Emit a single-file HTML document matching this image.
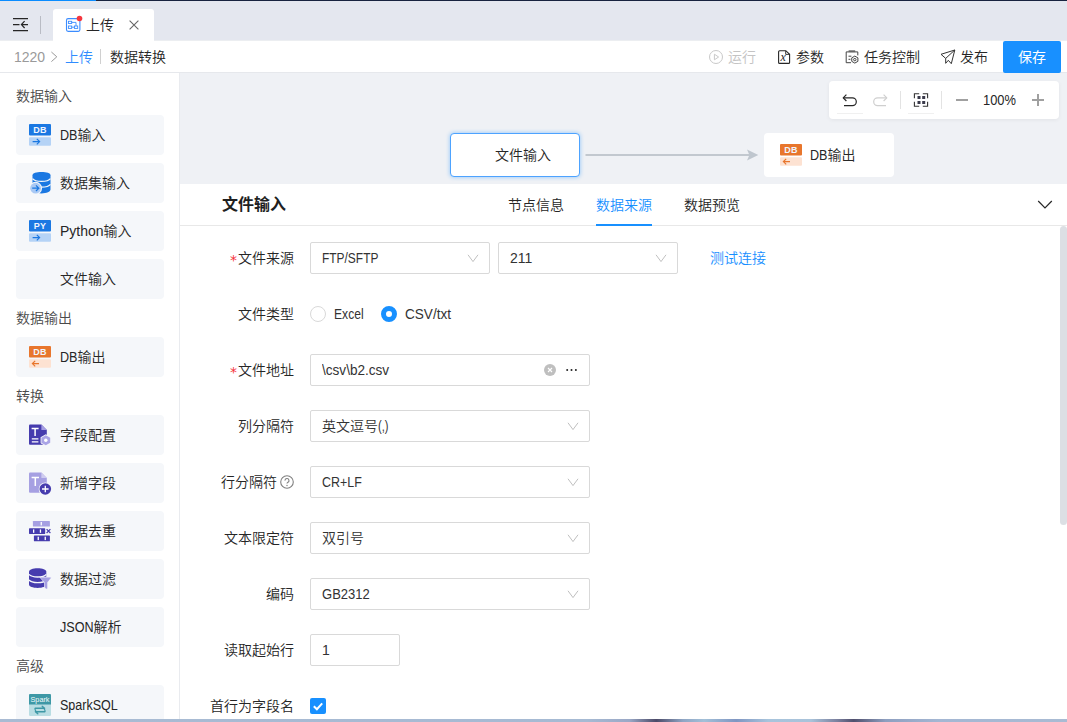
<!DOCTYPE html>
<html lang="zh-CN">
<head>
<meta charset="utf-8">
<title>数据转换</title>
<style>
*{box-sizing:border-box;margin:0;padding:0}
html,body{width:1067px;height:722px;overflow:hidden;background:#fff}
body{font-family:"Liberation Sans","Noto Sans CJK SC",sans-serif;font-size:14px;color:#262626;position:relative;font-weight:350}
.abs{position:absolute}
.t{position:absolute;white-space:nowrap;line-height:20px;height:20px}
/* top */
#topline{left:0;top:0;width:1067px;height:1px;background:#18233f}
#topline i{display:block;width:96px;height:1px;background:#0a8cff}
#tabbar{left:0;top:1px;width:1067px;height:39px;background:#e4e7ef}
#tab{left:53px;top:9px;width:101px;height:31px;background:#fff;border-radius:3px 3px 0 0}
#crumb{left:0;top:40px;width:1067px;height:33px;background:#fff;border-bottom:1px solid #e6e8ec}
/* sidebar */
#side{left:0;top:73px;width:180px;height:649px;background:#fff;border-right:1px solid #e9ebef}
.grp{position:absolute;left:16px;color:#4a4a4a;font-size:14px;line-height:20px;white-space:nowrap}
.it{position:absolute;left:16px;width:148px;height:40px;background:#f5f7fa;border-radius:4px}
.it>span{position:absolute;left:44px;top:10px;line-height:20px;font-size:14px;color:#262626;white-space:nowrap}
.it svg{position:absolute;left:13px;top:8px}
/* canvas */
#canvas{left:180px;top:73px;width:887px;height:111px;background:#eff1f5}
#tools{left:829px;top:81px;width:230px;height:38px;background:#fff;border-radius:4px;box-shadow:0 1px 4px rgba(0,0,0,.06)}
#node1{left:450px;top:133px;width:130px;height:44px;background:#fff;border:1px solid #4da3ff;border-radius:4px;box-shadow:0 0 4px rgba(24,144,255,.45)}
#node2{left:764px;top:133px;width:130px;height:44px;background:#fff;border-radius:4px}
/* panel */
#panel{left:180px;top:184px;width:887px;height:538px;background:#fff}
#phead{left:180px;top:184px;width:887px;height:42px;border-bottom:1px solid #e8e8e8}
.lbl{position:absolute;right:773px;white-space:nowrap;line-height:20px;color:#262626}
.lbl b{color:#f5323c;font-weight:normal;font-family:"DejaVu Sans","Liberation Sans",sans-serif;font-size:14px;position:relative;top:1.5px;margin-right:1px}
.inp{position:absolute;height:32px;border:1px solid #d9d9d9;border-radius:2px;background:#fff}
.inp>span{position:absolute;left:11px;top:5px;line-height:20px;white-space:nowrap;color:#333}
.inp svg.ar{position:absolute;right:10px;top:10px}
.sx{display:inline-block;white-space:nowrap}
.sx>i{display:inline-block;font-style:normal;white-space:nowrap;transform-origin:0 50%}
#bottom{left:0;top:719px;width:1067px;height:3px;background:linear-gradient(90deg,#a9bbd3 0,#a6bad3 55%,#9aa8c6 59%,#4b4a68 61.5%,#8fa5c4 64%,#a3c0d8 66%,#7f96c2 69%,#a8c4dc 72%,#a9c3da 76%,#7a7f9d 78.5%,#50506e 80%,#8e9fc0 83%,#a4b7d3 88%,#a9bbd3 100%)}
</style>
</head>
<body>
<div id="tabbar" class="abs"></div>
<div id="topline" class="abs"><i></i></div>
<div id="tab" class="abs"></div>
<div id="crumb" class="abs"></div>
<div class="abs" style="left:0;top:40px;width:53px;height:1px;background:#eceef1"></div><div class="abs" style="left:154px;top:40px;width:913px;height:1px;background:#eceef1"></div>
<div id="side" class="abs"></div>
<div id="canvas" class="abs"></div>
<div id="tools" class="abs"></div>
<div id="node1" class="abs"></div>
<div id="node2" class="abs"></div>
<div id="panel" class="abs"></div>
<div id="phead" class="abs"></div>

<!-- top tab bar -->
<svg class="abs" style="left:12px;top:17px" width="18" height="16" viewBox="0 0 18 16" fill="none" stroke="#262626" stroke-width="1.2"><path d="M1 1.6H16M1 7.6H7.5M9.5 7.6H16M12.6 4.2L9.4 7.6L12.6 11M1 13.6H16"/></svg>
<div class="abs" style="left:40px;top:16px;width:1px;height:18px;background:#b9bcc4"></div>
<svg class="abs" style="left:65px;top:15px" width="20" height="18" viewBox="0 0 20 18" fill="none" stroke="#3b8cff" stroke-width="1.1"><rect x="1.5" y="3.6" width="13.4" height="12.8" rx="1.6"/><rect x="3.4" y="6.3" width="3.3" height="2.2" stroke-width=".9"/><rect x="3.4" y="11" width="3.3" height="2.4" stroke-width=".9"/><rect x="9.4" y="11" width="3.3" height="2.4" stroke-width=".9"/><path d="M6.7 7.4H11V11M6.7 12.2H9.4" stroke-width=".9"/><circle cx="14.5" cy="3.5" r="2.8" fill="#f5363f" stroke="none"/></svg>
<div class="t" style="left:86px;top:15px;font-size:14px;color:#262626">上传</div>
<svg class="abs" style="left:127px;top:18px" width="14" height="14" viewBox="0 0 14 14" fill="none" stroke="#666" stroke-width="1.1"><path d="M2.6 2.6L11.4 11.4M11.4 2.6L2.6 11.4"/></svg>
<!-- breadcrumb -->
<div class="t" style="left:14px;top:47px;color:#9a9a9a">1220</div>
<svg class="abs" style="left:50px;top:51px" width="8" height="12" viewBox="0 0 8 12" fill="none" stroke="#9a9a9a" stroke-width="1"><path d="M1.4 1L6.8 5.8L1.4 10.6"/></svg>
<div class="t" style="left:65px;top:47px;color:#2f8cff">上传</div>
<div class="abs" style="left:100px;top:49px;width:1px;height:15px;background:#d0d0d0"></div>
<div class="t" style="left:110px;top:47px;color:#262626">数据转换</div>
<!-- top right actions -->
<svg class="abs" style="left:708px;top:49px" width="16" height="16" viewBox="0 0 16 16" fill="none" stroke="#c9c9c9" stroke-width="1"><circle cx="8" cy="8" r="6.5"/><path d="M6.4 5.2L10.6 8L6.4 10.8Z"/></svg>
<div class="t" style="left:728px;top:47px;color:#c4c4c4">运行</div>
<svg class="abs" style="left:776px;top:49px" width="16" height="16" viewBox="0 0 16 16" fill="none" stroke="#262626" stroke-width="1.1"><path d="M3.6 1.7H9.8L13.6 5.3V13.4Q13.6 14.4 12.6 14.4H3.6Q2.6 14.4 2.6 13.4V2.7Q2.6 1.7 3.6 1.7Z"/><path d="M9.7 1.9V5.4H13.4" stroke-width=".9"/><text x="4.6" y="12.2" font-family="Liberation Serif,serif" font-style="italic" font-size="12" fill="#262626" stroke="none">x</text></svg>
<div class="t" style="left:796px;top:47px">参数</div>
<svg class="abs" style="left:844px;top:49px" width="16" height="16" viewBox="0 0 16 16" fill="none" stroke="#444" stroke-width="1"><path d="M7 13.7H2.2V2.9H13.8V6.4"/><path d="M4.6 2.2H11.2" stroke-width="1.8" stroke="#666"/><path d="M4.5 7.2H7.4M4.5 10.3H6.4"/><path d="M10.8 7.1L13.9 8.85V12.35L10.8 14.1L7.75 12.35V8.85Z" fill="#fff"/><circle cx="10.8" cy="10.6" r="1.2"/></svg>
<div class="t" style="left:864px;top:47px">任务控制</div>
<svg class="abs" style="left:939px;top:49px" width="17" height="16" viewBox="0 0 17 16" fill="none" stroke="#333" stroke-width="1" stroke-linejoin="round"><path d="M2 5.3L15.8 1L12.3 14.7L9.3 11.3L6.7 14.3V9.4Z"/><path d="M6.7 9.4L15.8 1"/></svg>
<div class="t" style="left:960px;top:47px">发布</div>
<div class="abs" style="left:1003px;top:41px;width:58px;height:32px;background:#1890ff;border-radius:2px"></div>
<div class="t" style="left:1018px;top:47px;color:#fff;font-weight:400">保存</div>
<!-- sidebar -->
<div class="grp" style="top:86px">数据输入</div>
<div class="it" style="top:115px"><svg style="left:13px;top:9px" width="22" height="22" viewBox="0 0 22 22"><rect x="0" y="0" width="22" height="11.6" rx="1" fill="#1b78e2"/><rect x="0" y="13.2" width="22" height="8.6" rx="1" fill="#b5d3f6"/><text x="11" y="9.2" text-anchor="middle" font-family="Liberation Sans,sans-serif" font-weight="bold" font-size="9" letter-spacing=".3" fill="#f0f5ff">DB</text><path d="M3.6 17.6H10.6M7.8 14.8L10.6 17.6L7.8 20.4" fill="none" stroke="#1b78e2" stroke-width="1.2"/></svg><span><span class="sx" style="width:17.5px"><i style="transform:scaleX(0.9)">DB</i></span>输入</span></div>
<div class="it" style="top:163px"><svg style="left:11.8px;top:7px" width="24" height="24" viewBox="0 0 24 24"><path d="M4.5 5.2C4.5 3.2 8.4 2 13.5 2S22.5 3.2 22.5 5.2V19.6C22.5 21.8 18.6 23.4 13.5 23.4S4.5 21.8 4.5 19.6Z" fill="#1b78e2"/><path d="M4.5 8.6C6 10.6 9.4 11.4 13.5 11.4S21 10.6 22.5 8.6M4.5 14.4C6 16.4 9.4 17.2 13.5 17.2S21 16.4 22.5 14.4" fill="none" stroke="#f5f7fa" stroke-width="1.3"/><circle cx="7.6" cy="18.2" r="6.4" fill="#f5f7fa"/><circle cx="7.6" cy="18.2" r="5.4" fill="#a9c9f4"/><path d="M4.2 18.2H10.6M8 15.4L10.8 18.2L8 21" fill="none" stroke="#1b78e2" stroke-width="1.3"/></svg><span>数据集输入</span></div>
<div class="it" style="top:211px"><svg style="left:13px;top:9px" width="22" height="22" viewBox="0 0 22 22"><rect x="0" y="0" width="22" height="11.6" rx="1" fill="#1b78e2"/><rect x="0" y="13.2" width="22" height="8.6" rx="1" fill="#b5d3f6"/><text x="11" y="9.2" text-anchor="middle" font-family="Liberation Sans,sans-serif" font-weight="bold" font-size="9" letter-spacing=".3" fill="#f0f5ff">PY</text><path d="M3.6 17.6H10.6M7.8 14.8L10.6 17.6L7.8 20.4" fill="none" stroke="#1b78e2" stroke-width="1.2"/></svg><span>Python输入</span></div>
<div class="it" style="top:259px"><span>文件输入</span></div>
<div class="grp" style="top:308px">数据输出</div>
<div class="it" style="top:337px"><svg style="left:13px;top:9px" width="22" height="22" viewBox="0 0 22 22"><rect x="0" y="0" width="22" height="11.6" rx="1" fill="#e8762d"/><rect x="0" y="13.2" width="22" height="8.6" rx="1" fill="#fde2d2"/><text x="11" y="9.2" text-anchor="middle" font-family="Liberation Sans,sans-serif" font-weight="bold" font-size="9" letter-spacing=".3" fill="#f0f5ff">DB</text><path d="M10 17.6H3.4M6.2 14.8L3.4 17.6L6.2 20.4" fill="none" stroke="#e8762d" stroke-width="1.2"/></svg><span><span class="sx" style="width:17.5px"><i style="transform:scaleX(0.9)">DB</i></span>输出</span></div>
<div class="grp" style="top:386px">转换</div>
<div class="it" style="top:415px"><svg style="left:12px;top:7.5px" width="24" height="24" viewBox="0 0 24 24"><path d="M1 2.6Q1 1.6 2 1.6H13.4L18.8 7V20.8Q18.8 21.8 17.8 21.8H2Q1 21.8 1 20.8Z" fill="#463cae"/><path d="M13.4 1.6L18.8 7H13.4Z" fill="#a49de2"/><path d="M3.6 5.6H10.6M7.1 5.6V13" fill="none" stroke="#fff" stroke-width="1.5"/><path d="M3.8 15.8H10.4M3.8 18.8H10.4" fill="none" stroke="#fff" stroke-width="1.3"/><path d="M17.8 11.2L23 14.2V20.2L17.8 23.2L12.6 20.2V14.2Z" fill="#f5f7fa"/><path d="M17.8 12.2L22.2 14.7V19.7L17.8 22.2L13.4 19.7V14.7Z" fill="#aaa4e6"/><circle cx="17.8" cy="17.2" r="1.7" fill="#fff"/></svg><span>字段配置</span></div>
<div class="it" style="top:463px"><svg style="left:12px;top:7.5px" width="24" height="24" viewBox="0 0 24 24"><path d="M1 2.6Q1 1.6 2 1.6H13.4L18.8 7V20.8Q18.8 21.8 17.8 21.8H2Q1 21.8 1 20.8Z" fill="#a6a0e2"/><path d="M13.4 1.6L18.8 7H13.4Z" fill="#cfccf0"/><path d="M3.6 6.4H11M7.3 6.4V15" fill="none" stroke="#fff" stroke-width="1.5"/><circle cx="17.3" cy="18" r="6.6" fill="#f5f7fa"/><circle cx="17.3" cy="18" r="5.8" fill="#463cae"/><path d="M14 18H20.6M17.3 14.7V21.3" stroke="#fff" stroke-width="1.3" fill="none"/></svg><span>新增字段</span></div>
<div class="it" style="top:511px"><svg style="left:12px;top:8px" width="24" height="24" viewBox="0 0 24 24"><rect x="4.9" y="1.9" width="17" height="5.6" rx=".6" fill="#a6a0e2"/><rect x="12.6" y="3" width="1.3" height="3.4" fill="#fff"/><rect x="1" y="9.3" width="16.2" height="5.6" rx=".6" fill="#463cae"/><rect x="5" y="10.4" width="1.3" height="3.4" fill="#fff"/><rect x="11.8" y="10.4" width="1.3" height="3.4" fill="#fff"/><path d="M18.6 10.2L22.4 14M22.4 10.2L18.6 14" stroke="#463cae" stroke-width="1.2" fill="none"/><rect x="5.9" y="16.5" width="16" height="5.8" rx=".6" fill="#463cae"/><rect x="9.6" y="17.7" width="1.3" height="3.4" fill="#fff"/><rect x="16.6" y="17.7" width="1.3" height="3.4" fill="#fff"/></svg><span>数据去重</span></div>
<div class="it" style="top:559px"><svg style="left:12px;top:8px" width="24" height="24" viewBox="0 0 24 24"><path d="M1 4.6C1 2.6 4.8 1.2 9.6 1.2S18.3 2.6 18.3 4.6V17.6C18.3 19.6 14.4 21 9.6 21S1 19.6 1 17.6Z" fill="#463cae"/><path d="M1 7.4C2.6 9.2 5.8 10 9.6 10S16.8 9.2 18.3 7.4M1 13C2.6 14.8 5.8 15.6 9.6 15.6S16.8 14.8 18.3 13" fill="none" stroke="#f5f7fa" stroke-width="1.3"/><path d="M11 9.8H24L19.6 15.6V23L16.2 21.4V15.6Z" fill="#f5f7fa"/><path d="M12.6 10.8H22.6L19 15.4V21.6L17 20.6V15.4Z" fill="#a6a0e2" stroke="#a6a0e2" stroke-width=".6" stroke-linejoin="round"/></svg><span>数据过滤</span></div>
<div class="it" style="top:607px"><span><span class="sx" style="width:33.5px"><i style="transform:scaleX(0.9)">JSON</i></span>解析</span></div>
<div class="grp" style="top:656px">高级</div>
<div class="it" style="top:685px"><svg style="left:13px;top:9px" width="22" height="22" viewBox="0 0 22 22"><rect x="0" y="0" width="22" height="22" rx="1.2" fill="#b9dde3"/><path d="M0 1.2Q0 0 1.2 0H20.8Q22 0 22 1.2V10.6H0Z" fill="#3e98a6"/><text x="11" y="7.6" text-anchor="middle" font-family="Liberation Sans,sans-serif" font-size="7" fill="#f2fbfc" textLength="19" lengthAdjust="spacingAndGlyphs">Spark</text><path d="M6.2 14.2H15.4M13.2 12.2L15.6 14.2M15.8 17.8H6.6M8.8 19.8L6.4 17.8" fill="none" stroke="#3e98a6" stroke-width="1.4" stroke-linecap="round"/><path d="M6.2 14.2Q5.6 16 7 17M15.8 17.8Q16.6 16 15 15" fill="none" stroke="#3e98a6" stroke-width="1.2"/></svg><span><span class="sx" style="width:57.8px"><i style="transform:scaleX(0.895)">SparkSQL</i></span></span></div>
<!-- canvas -->
<div class="t" style="left:495px;top:145px;font-size:14px;color:#262626">文件输入</div>
<svg class="abs" style="left:584px;top:147px" width="180" height="16" viewBox="0 0 180 16"><path d="M1.5 8H166" stroke="#c2c8cf" stroke-width="2" fill="none"/><path d="M174.3 8L163 2.6L165.4 8L163 13.4Z" fill="#bfc6ce"/></svg>
<div class="abs" style="left:780px;top:144px;width:22px;height:22px"><svg width="22" height="22" viewBox="0 0 22 22"><rect x="0" y="0" width="22" height="11.6" rx="1" fill="#e8762d"/><rect x="0" y="13.2" width="22" height="8.6" rx="1" fill="#fde2d2"/><text x="11" y="9.2" text-anchor="middle" font-family="Liberation Sans,sans-serif" font-weight="bold" font-size="9" letter-spacing=".3" fill="#f0f5ff">DB</text><path d="M10 17.6H3.4M6.2 14.8L3.4 17.6L6.2 20.4" fill="none" stroke="#e8762d" stroke-width="1.2"/></svg></div>
<div class="t" style="left:810px;top:145px;font-size:14px;color:#262626"><span class="sx" style="width:17.5px"><i style="transform:scaleX(0.9)">DB</i></span>输出</div>
<!-- tools -->
<svg class="abs" style="left:841px;top:92px" width="18" height="16" viewBox="0 0 18 16" fill="none" stroke="#262626" stroke-width="1.2" stroke-linejoin="round"><path d="M5.4 2.6L2.2 5.8L5.4 9"/><path d="M2.4 5.8H11.4A3.9 3.9 0 0 1 11.4 13.6H3"/></svg>
<svg class="abs" style="left:871px;top:92px" width="18" height="16" viewBox="0 0 18 16" fill="none" stroke="#cfcfcf" stroke-width="1.2" stroke-linejoin="round"><path d="M12.6 2.6L15.8 5.8L12.6 9"/><path d="M15.6 5.8H6.6A3.9 3.9 0 0 0 6.6 13.6H15"/></svg>
<div class="abs" style="left:900px;top:91px;width:1px;height:18px;background:#e3e3e3"></div>
<svg class="abs" style="left:913px;top:92px" width="16" height="16" viewBox="0 0 16 16" fill="none" stroke="#333" stroke-width="1.1"><path d="M1.4 6.2V1.7H6.2M9.8 1.7H14.6V6.2M14.6 9.8V14.3H9.8M6.2 14.3H1.4V9.8"/><rect x="4.5" y="4" width="3" height="3" fill="#3a3a4a" stroke="none"/><rect x="9.2" y="4" width="3" height="3" fill="#3a3a4a" stroke="none"/><rect x="4.5" y="9" width="3" height="3" fill="#3a3a4a" stroke="none"/><rect x="9.2" y="9" width="3" height="3" fill="#3a3a4a" stroke="none"/></svg>
<div class="abs" style="left:941px;top:91px;width:1px;height:18px;background:#e3e3e3"></div>
<div class="abs" style="left:956px;top:99px;width:12px;height:2px;background:#a0a0a0"></div>
<div class="t" style="left:983px;top:90px;font-size:14px;color:#262626"><span class="sx" style="width:33px"><i style="transform:scaleX(0.92)">100%</i></span></div>
<div class="abs" style="left:1032px;top:99px;width:12px;height:2px;background:#a0a0a0"></div>
<div class="abs" style="left:1037px;top:94px;width:2px;height:12px;background:#a0a0a0"></div>
<div class="abs" style="left:837px;top:113px;width:26px;height:1px;background:#f0f0f0"></div>
<div class="abs" style="left:908px;top:113px;width:26px;height:1px;background:#f0f0f0"></div>
<!-- panel -->
<div class="t" style="left:222px;top:194px;font-size:16px;font-weight:bold;color:#1f1f1f;line-height:22px;height:22px">文件输入</div>
<div class="t" style="left:508px;top:195px;color:#262626">节点信息</div>
<div class="t" style="left:596px;top:195px;color:#1890ff">数据来源</div>
<div class="t" style="left:684px;top:195px;color:#262626">数据预览</div>
<div class="abs" style="left:596px;top:224px;width:56px;height:2px;background:#1890ff"></div>
<svg class="abs" style="left:1037px;top:199px" width="16" height="11" viewBox="0 0 16 11" fill="none" stroke="#262626" stroke-width="1.2"><path d="M1.2 2L8 8.8L14.8 2"/></svg>
<div class="abs" style="left:1060px;top:226px;width:7px;height:299px;background:#dcdfe4;border-radius:3.5px"></div>
<div class="lbl" style="top:248px;right:773px"><b>*</b>文件来源</div>
<div class="inp" style="left:310px;top:242px;width:180px"><span><span class="sx" style="width:56.4px"><i style="transform:scaleX(0.853)">FTP/SFTP</i></span></span><svg class="ar" width="12" height="12" viewBox="0 0 12 12" fill="none" stroke="#c0c0c0" stroke-width="1"><path d="M1 1.8L6 8.6L11 1.8"/></svg></div>
<div class="inp" style="left:498px;top:242px;width:180px"><span>211</span><svg class="ar" width="12" height="12" viewBox="0 0 12 12" fill="none" stroke="#c0c0c0" stroke-width="1"><path d="M1 1.8L6 8.6L11 1.8"/></svg></div>
<div class="t" style="left:710px;top:248px;color:#1890ff">测试连接</div>
<div class="lbl" style="top:304px;right:773px">文件类型</div>
<div class="abs" style="left:310px;top:306px;width:16px;height:16px;border:1px solid #d9d9d9;border-radius:50%;background:#fff"></div>
<div class="t" style="left:334px;top:304px;color:#333"><span class="sx" style="width:29.6px"><i style="transform:scaleX(0.865)">Excel</i></span></div>
<div class="abs" style="left:381px;top:306px;width:16px;height:16px;border:5px solid #1890ff;border-radius:50%;background:#fff"></div>
<div class="t" style="left:405px;top:304px;color:#333"><span class="sx" style="width:46.1px"><i style="transform:scaleX(0.97)">CSV/txt</i></span></div>
<div class="lbl" style="top:360px;right:773px"><b>*</b>文件地址</div>
<div class="inp" style="left:310px;top:354px;width:280px"><span><span class="sx" style="width:67.2px"><i style="transform:scaleX(0.97)">\csv\b2.csv</i></span></span><svg style="position:absolute;left:233px;top:9px" width="12" height="12" viewBox="0 0 12 12"><circle cx="6" cy="6" r="6" fill="#bfbfbf"/><path d="M4 4L8 8M8 4L4 8" stroke="#fff" stroke-width="1.1"/></svg><svg style="position:absolute;left:253.5px;top:13px" width="14" height="4" viewBox="0 0 14 4" fill="#222"><circle cx="2.2" cy="2" r="1"/><circle cx="6.5" cy="2" r="1"/><circle cx="10.9" cy="2" r="1"/></svg></div>
<div class="lbl" style="top:416px;right:773px">列分隔符</div>
<div class="inp" style="left:310px;top:410px;width:280px"><span>英文逗号<span class="sx" style="width:10.5px"><i style="transform:scaleX(0.79)">(,)</i></span></span><svg class="ar" width="12" height="12" viewBox="0 0 12 12" fill="none" stroke="#c0c0c0" stroke-width="1"><path d="M1 1.8L6 8.6L11 1.8"/></svg></div>
<div class="lbl" style="top:472px;right:790px">行分隔符</div>
<svg class="abs" style="left:280px;top:475px" width="14" height="14" viewBox="0 0 14 14" fill="none" stroke="#808080" stroke-width="1.1"><circle cx="7" cy="7" r="6.3"/><path d="M5 5.6A2 2 0 1 1 7.6 7.4Q7 7.7 7 8.6" stroke-width="1.1"/><circle cx="7" cy="10.4" r=".75" fill="#8c8c8c" stroke="none"/></svg>
<div class="inp" style="left:310px;top:466px;width:280px"><span><span class="sx" style="width:39.7px"><i style="transform:scaleX(0.888)">CR+LF</i></span></span><svg class="ar" width="12" height="12" viewBox="0 0 12 12" fill="none" stroke="#c0c0c0" stroke-width="1"><path d="M1 1.8L6 8.6L11 1.8"/></svg></div>
<div class="lbl" style="top:528px;right:773px">文本限定符</div>
<div class="inp" style="left:310px;top:522px;width:280px"><span>双引号</span><svg class="ar" width="12" height="12" viewBox="0 0 12 12" fill="none" stroke="#c0c0c0" stroke-width="1"><path d="M1 1.8L6 8.6L11 1.8"/></svg></div>
<div class="lbl" style="top:584px;right:773px">编码</div>
<div class="inp" style="left:310px;top:578px;width:280px"><span><span class="sx" style="width:47.7px"><i style="transform:scaleX(0.93)">GB2312</i></span></span><svg class="ar" width="12" height="12" viewBox="0 0 12 12" fill="none" stroke="#c0c0c0" stroke-width="1"><path d="M1 1.8L6 8.6L11 1.8"/></svg></div>
<div class="lbl" style="top:640px;right:773px">读取起始行</div>
<div class="inp" style="left:310px;top:634px;width:90px"><span>1</span></div>
<div class="lbl" style="top:696px;right:773px">首行为字段名</div>
<div class="abs" style="left:310px;top:698px;width:16px;height:16px;background:#1890ff;border-radius:2px"></div>
<svg class="abs" style="left:310px;top:698px" width="16" height="16" viewBox="0 0 16 16" fill="none" stroke="#fff" stroke-width="2"><path d="M3.8 8.2L6.9 11.2L12.2 5.4"/></svg>
<!--CONTENT4-->
<div id="bottom" class="abs"></div>
</body>
</html>
